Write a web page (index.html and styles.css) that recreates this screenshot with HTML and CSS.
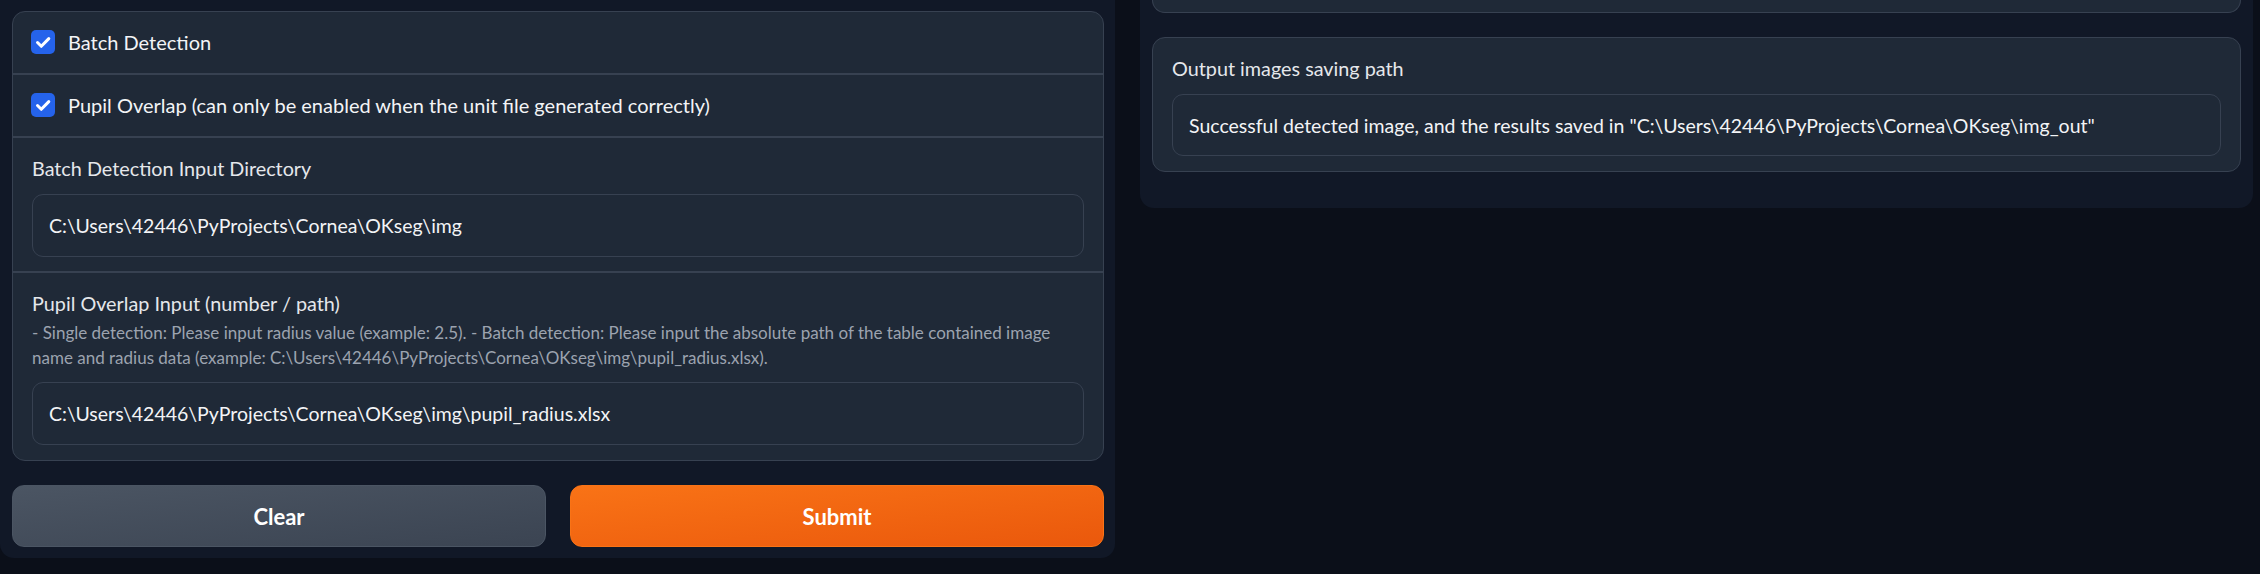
FILE: index.html
```html
<!DOCTYPE html>
<html>
<head>
<meta charset="utf-8">
<link rel="stylesheet" href="styles.css">
</head>
<body>
<div class="app">
  <div class="col-left panel">
    <div class="card">
      <div class="row check-row">
        <span class="checkbox"><svg viewBox="0 0 24 24" width="24" height="24"><path d="M6.5 12.5l3.8 3.8L17.8 8.6" fill="none" stroke="#fff" stroke-width="3" stroke-linecap="round" stroke-linejoin="round"/></svg></span>
        <span class="check-label">Batch Detection</span>
      </div>
      <div class="row check-row">
        <span class="checkbox"><svg viewBox="0 0 24 24" width="24" height="24"><path d="M6.5 12.5l3.8 3.8L17.8 8.6" fill="none" stroke="#fff" stroke-width="3" stroke-linecap="round" stroke-linejoin="round"/></svg></span>
        <span class="check-label">Pupil Overlap (can only be enabled when the unit file generated correctly)</span>
      </div>
      <div class="row field-row r3">
        <div class="label">Batch Detection Input Directory</div>
        <div class="input">C:\Users\42446\PyProjects\Cornea\OKseg\img</div>
      </div>
      <div class="row field-row r4">
        <div class="label">Pupil Overlap Input (number / path)</div>
        <div class="info">- Single detection: Please input radius value (example: 2.5). - Batch detection: Please input the absolute path of the table contained image<br>name and radius data (example: C:\Users\42446\PyProjects\Cornea\OKseg\img\pupil_radius.xlsx).</div>
        <div class="input">C:\Users\42446\PyProjects\Cornea\OKseg\img\pupil_radius.xlsx</div>
      </div>
    </div>
    <div class="buttons">
      <button class="btn btn-secondary">Clear</button>
      <button class="btn btn-primary">Submit</button>
    </div>
  </div>
  <div class="col-right panel right-panel">
    <div class="card stub"></div>
    <div class="card out-card">
      <div class="label">Output images saving path</div>
      <div class="input">Successful detected image, and the results saved in "C:\Users\42446\PyProjects\Cornea\OKseg\img_out"</div>
    </div>
  </div>
</div>
</body>
</html>
```

FILE: styles.css
```css
* { box-sizing: border-box; }
html, body {
  margin: 0;
  padding: 0;
  background: #0b0f19;
  font-family: "Lato", "Liberation Sans", sans-serif;
  color: #e5e7eb;
}
.app {
  display: flex;
  align-items: flex-start;
  gap: 25px;
  padding-right: 7px;
}
.panel {
  background: #111827;
  border-radius: 0 0 14px 14px;
}
.col-left {
  width: 1115px;
  flex: none;
  padding: 11px 11px 11px 12px;
}
.col-right {
  flex: 1;
  padding: 0 12px 36px 12px;
}
.card {
  background: #1f2937;
  border: 1px solid #374151;
  border-radius: 13px;
}
.row {
  border-bottom: 2px solid #374151;
}
.row:last-child { border-bottom: none; }
.check-row {
  height: 63px;
  display: flex;
  align-items: center;
  gap: 13px;
  padding: 0 19px 2px 18px;
}
.checkbox {
  width: 24px;
  height: 24px;
  border-radius: 5px;
  background: #2563eb;
  display: flex;
  flex: none;
}
.check-label {
  font-size: 20px;
  color: #f3f4f6;
}
.field-row {
  padding: 15px 19px 14px 19px;
}
.r4 { padding-bottom: 15px; }
.label {
  font-size: 19.8px;
  line-height: 30px;
  color: #e5e7eb;
}
.r3 .label, .out-card .label { margin-bottom: 11px; }
.info {
  font-size: 17px;
  line-height: 25px;
  color: #9ca3af;
  margin-top: 2px;
  margin-bottom: 12px;
}
.input {
  height: 63px;
  display: flex;
  align-items: center;
  padding: 0 16px;
  border: 1px solid #374151;
  border-radius: 11px;
  background: #1f2937;
  font-size: 19.5px;
  color: #f3f4f6;
}
.buttons {
  display: grid;
  grid-template-columns: 1fr 1fr;
  gap: 24px;
  margin-top: 24px;
}
.btn {
  height: 62px;
  border-radius: 12px;
  font-family: "Lato", "Liberation Sans", sans-serif;
  font-size: 22px;
  font-weight: 700;
  color: #ffffff;
  cursor: pointer;
}
.btn-secondary {
  background: linear-gradient(to bottom right, #4b5563, #3b4452);
  border: 1px solid #4b5563;
}
.btn-primary {
  background: linear-gradient(to bottom right, #f97316, #ea580c);
  border: 1px solid #f97316;
}
.stub {
  height: 13px;
  border-top: none;
  border-radius: 0 0 13px 13px;
}
.out-card {
  margin-top: 24px;
  padding: 15px 19px 15px 19px;
}
.out-card .input { height: 62px; }
```
